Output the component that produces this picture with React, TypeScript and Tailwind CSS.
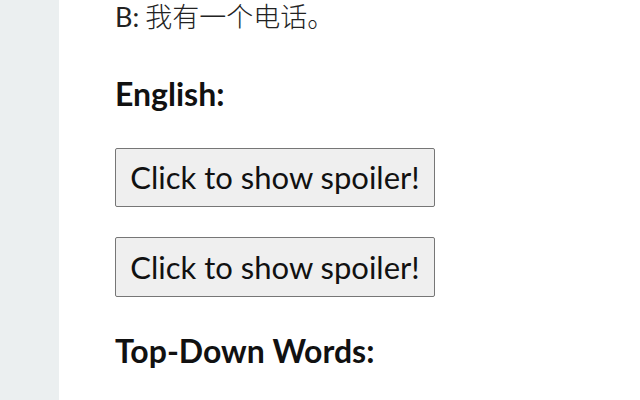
export default function App() {
  const font = { fontFamily: "Lato, 'Noto Sans CJK SC', sans-serif" };
  return (
    <div className="flex h-[400px] w-[640px] overflow-hidden bg-white" style={font}>
      <div className="w-[59px] shrink-0 bg-[#ebeff0]" />
      <div className="flex flex-col pl-[56px] text-[32px] text-[#111]">
        <div className="-mt-[3px] flex h-[40px] items-center text-[27px] text-[#222]">
          B:<span className="ml-[6px] font-light">我有一个电话。</span>
        </div>
        <div className="mt-[37px] flex h-[40px] items-center font-bold">English:</div>
        <button className="mt-[34px] flex h-[59px] w-[320px] items-center justify-center rounded-[2px] border border-[#767676] bg-[#efefef] text-[31px]">
          Click to show spoiler!
        </button>
        <button className="mt-[30px] flex h-[60px] w-[320px] items-center justify-center rounded-[2px] border border-[#767676] bg-[#efefef] text-[31px]">
          Click to show spoiler!
        </button>
        <div className="mt-[34px] flex h-[40px] items-center font-bold">Top-Down Words:</div>
      </div>
    </div>
  );
}
